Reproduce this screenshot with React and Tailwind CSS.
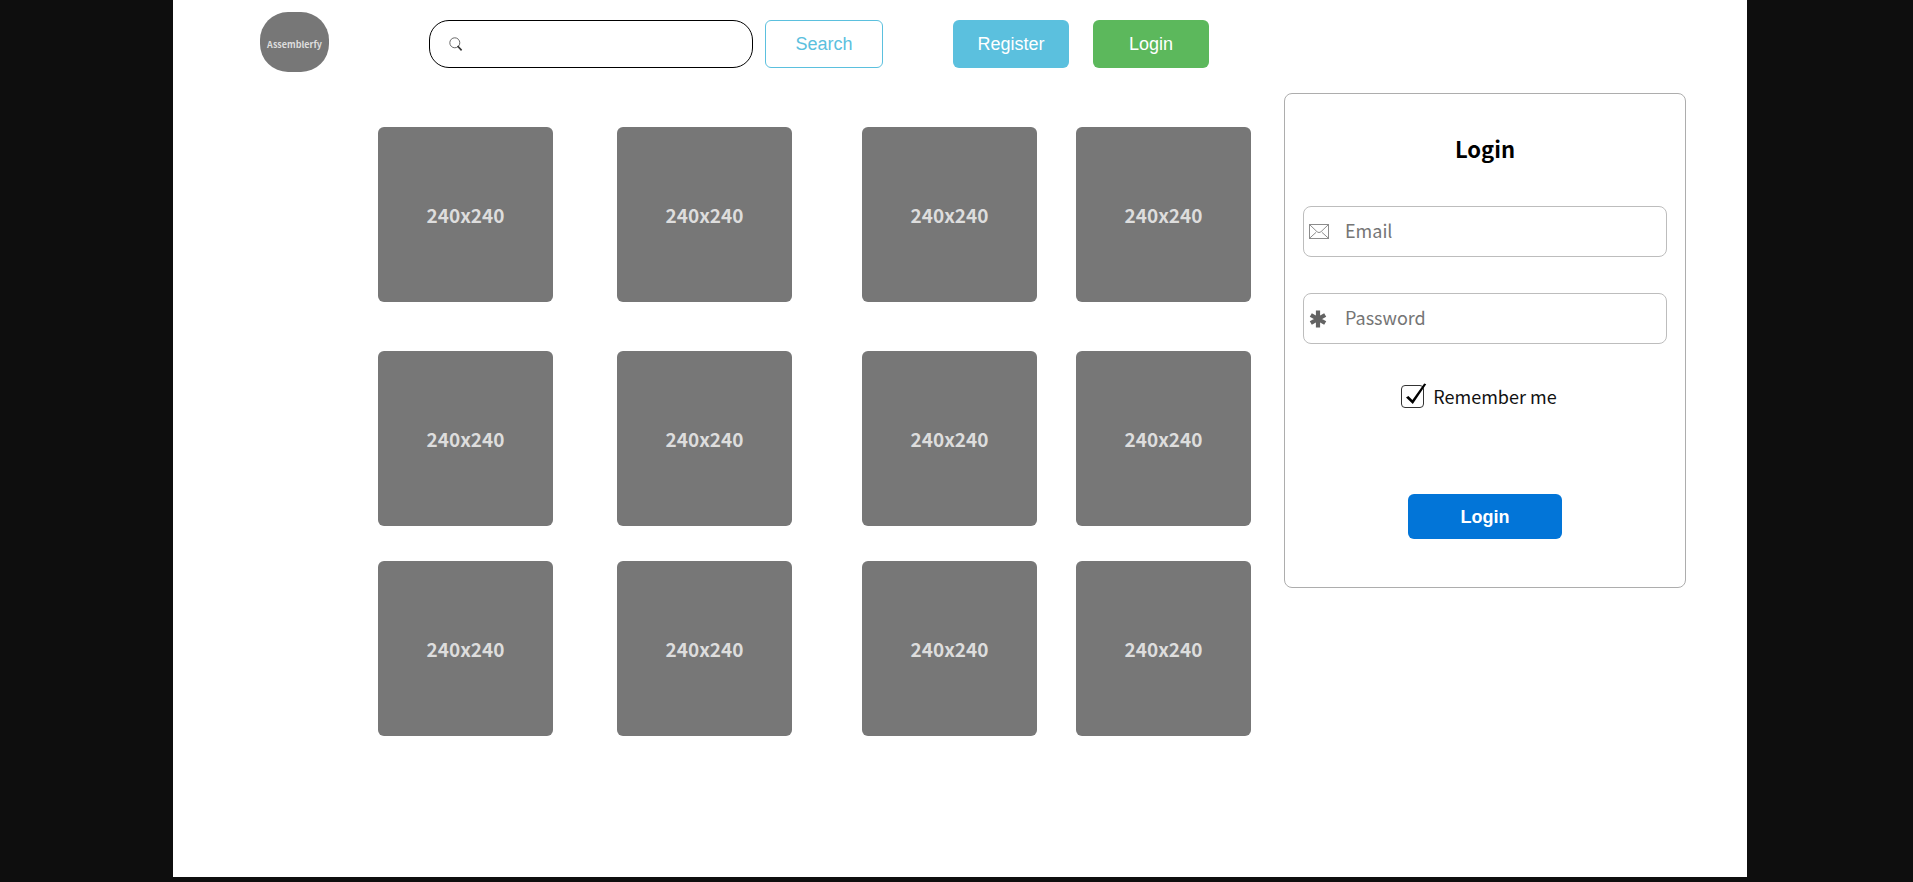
const products = Array.from({ length: 12 }, (_, i) => ({ id: i, label: '240x240' }));

function SearchIcon() {
  return (
    <svg viewBox="0 0 14 14" className="size-3.5 shrink-0" fill="none" aria-hidden="true">
      <circle cx="5.8" cy="5.8" r="5" stroke="#6a6a6a" strokeWidth="1" />
      <path d="M8.6 9l4 4.4" stroke="#333" strokeWidth="1.6" />
    </svg>
  );
}

function MailIcon() {
  return (
    <svg viewBox="0 0 20 15" className="h-[15px] w-5" fill="none" stroke="#8c8c8c" aria-hidden="true">
      <rect x="0.5" y="0.5" width="19" height="14" />
      <path d="M0.5 0.5l7.6 7.3q1.9 1.6 3.8 0L19.5 0.5M0.5 14.3l6.6-6M19.5 14.3l-6.6-6" />
    </svg>
  );
}

function AsteriskIcon() {
  return (
    <svg viewBox="0 0 18 18" className="size-[18px]" stroke="#636363" strokeWidth="4.2" strokeLinecap="butt" aria-hidden="true">
      <path d="M9 0.6v16.8M1.8 5l14.4 8M1.8 13l14.4-8" />
    </svg>
  );
}

function Field({ id, label, type, icon }) {
  return (
    <div className="flex h-[51px] items-center rounded-lg border border-[#bdbdbd] pl-[5px]">
      <label htmlFor={id} className="flex w-9 shrink-0">
        {icon}
      </label>
      <input
        id={id}
        type={type}
        aria-label={label}
        placeholder={label}
        className="h-full min-w-0 flex-1 bg-transparent pb-[3px] text-lg text-[#333] outline-none placeholder:text-[#757575]"
      />
    </div>
  );
}

function Header() {
  return (
    <header className="flex items-start pt-3 pl-[87px] font-['Liberation_Sans',sans-serif]">
      <a
        href="#"
        className="flex h-[60px] w-[69px] shrink-0 items-center justify-center rounded-[28px] bg-[#777] pt-1.5 font-['Noto_Sans_CJK_SC',sans-serif] text-[9px] font-bold text-[#ddd]"
      >
        Assemblerfy
      </a>
      <form role="search" className="mt-2 ml-[100px] flex gap-3" onSubmit={(e) => e.preventDefault()}>
        <div className="flex h-12 w-[324px] items-center rounded-[20px] border border-black pl-[19px]">
          <label htmlFor="search">
            <SearchIcon />
          </label>
          <input
            id="search"
            type="search"
            aria-label="Search products"
            className="ml-3 h-full min-w-0 flex-1 bg-transparent pr-4 text-lg outline-none"
          />
        </div>
        <button type="submit" className="h-12 w-[118px] rounded-md border border-[#5bc0de] text-lg text-[#5bc0de]">
          Search
        </button>
      </form>
      <div className="mt-2 ml-[70px] flex gap-6">
        <button type="button" className="h-12 w-[116px] rounded-md bg-[#5bc0de] text-lg text-white">
          Register
        </button>
        <button type="button" className="h-12 w-[116px] rounded-md bg-[#5cb85c] text-lg text-white">
          Login
        </button>
      </div>
    </header>
  );
}

function LoginCard() {
  return (
    <form
      onSubmit={(e) => e.preventDefault()}
      className="flex h-[495px] w-[402px] shrink-0 flex-col rounded-lg border border-[#adadad] px-[18px] pt-[34px]"
    >
      <h2 className="text-center text-[22px] leading-10 font-bold text-black">Login</h2>
      <div className="mt-[38px] flex flex-col gap-9">
        <Field id="email" label="Email" type="email" icon={<MailIcon />} />
        <Field id="password" label="Password" type="password" icon={<AsteriskIcon />} />
      </div>
      <div className="mt-[38px] flex items-center justify-center gap-2 pr-3">
        <span className="relative flex size-6">
          <input
            id="remember"
            type="checkbox"
            defaultChecked
            className="peer size-[23px] appearance-none rounded-[4px] border border-[#333]"
          />
          <svg
            viewBox="0 0 26 26"
            className="pointer-events-none absolute -top-0.5 left-0 hidden size-[26px] peer-checked:block"
            aria-hidden="true"
          >
            <path d="M5 14.5l2.4-1.6 4 4.2L23.2 0.4l2 0.9L11.8 21z" fill="#000" />
          </svg>
        </span>
        <label htmlFor="remember" className="pb-0.5 text-lg text-[#111]">
          Remember me
        </label>
      </div>
      <button
        type="submit"
        className="mt-[82px] h-[45px] w-[154px] self-center rounded-md bg-[#0275d8] font-['Liberation_Sans',sans-serif] text-lg font-bold text-white"
      >
        Login
      </button>
    </form>
  );
}

export default function App() {
  return (
    <div className="min-h-screen bg-[#0e0e0e] pr-[166px] pb-[5px] pl-[173px] font-['Noto_Sans_CJK_SC',sans-serif]">
      <div className="min-h-[877px] bg-white">
        <Header />
        <main className="flex items-start gap-[33px] pt-[21px] pr-[61px] pl-[205px]">
          <ul className="mt-[34px] grid flex-1 grid-cols-[239fr_245fr_214fr_175fr] grid-rows-[224px_210px_175px]">
            {products.map((product) => (
              <li
                key={product.id}
                className="flex size-[175px] items-center justify-center rounded-md bg-[#777] pt-0.5 text-[19px] font-bold text-[#ddd]"
              >
                {product.label}
              </li>
            ))}
          </ul>
          <LoginCard />
        </main>
      </div>
    </div>
  );
}
